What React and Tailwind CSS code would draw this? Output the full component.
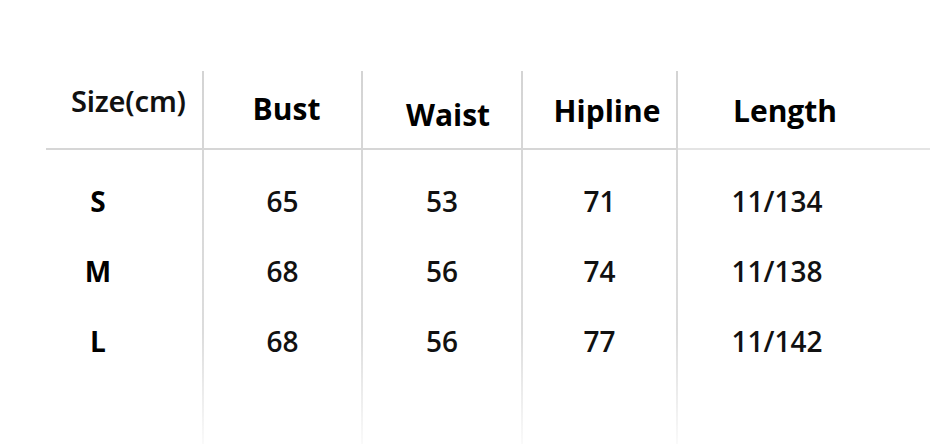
import React from "react";

const font = { fontFamily: '"Open Sans", "Noto Sans", sans-serif' };
const noto = { fontFamily: '"Noto Sans", "Open Sans", sans-serif' };

const cols = [
  { h: "Bust", data: ["65", "68", "68"], w: "w-[157px]", inner: "w-[157px]", hpad: "pt-[23px] pl-[8px]" },
  { h: "Waist", data: ["53", "56", "56"], w: "w-[158px]", inner: "w-[158px]", hpad: "pt-[29px] pl-[12px]" },
  { h: "Hipline", data: ["71", "74", "77"], w: "w-[153px]", inner: "w-[153px]", hpad: "pt-[25px] pl-[15px]" },
  { h: "Length", data: ["11/134", "11/138", "11/142"], w: "w-[252px]", inner: "w-[198px]", hpad: "pt-[25px] pl-[16px]" },
];

function VLine() {
  return (
    <div className="w-[2px] h-[373px] shrink-0 bg-gradient-to-b from-[#d4d4d4] via-[#dcdcdc] via-70% to-[#fafafa]" />
  );
}

export default function App() {
  return (
    <div className="w-[930px] h-[444px] bg-white overflow-hidden pt-[71px] pl-[46px]" style={font}>
      <div className="flex">
        {/* first column */}
        <div className="w-[156px] shrink-0 flex flex-col">
          <div className="h-[79px] border-b-2 border-[#d6d6d6] pt-[15px] pl-[25px]">
            <span className="text-[29px] font-semibold text-[#111] leading-none tracking-[-0.2px]" style={noto}>
              Size(cm)
            </span>
          </div>
          <div className="pt-[16px] flex flex-col">
            {["S", "M", "L"].map((s) => (
              <div key={s} className="h-[70px] w-[104px] flex items-center justify-center text-[28px] font-bold text-black leading-none">
                {s}
              </div>
            ))}
          </div>
        </div>
        {cols.map((c, i) => (
          <div key={c.h} className="flex shrink-0">
            <VLine />
            <div className={`${c.w} shrink-0 flex flex-col`}>
              <div
                className={`h-[79px] border-b-2 ${i === 3 ? "border-[#e4e4e4]" : "border-[#d6d6d6]"}`}
              >
                <div className={`${c.inner} ${c.hpad} text-center text-[30px] font-bold text-black leading-none`}>{c.h}</div>
              </div>
              <div className={`pt-[16px] flex flex-col ${c.inner}`}>
                {c.data.map((d, j) => (
                  <div key={j} className="h-[70px] flex items-center justify-center text-[28px] font-semibold text-[#111] leading-none">
                    {d}
                  </div>
                ))}
              </div>
            </div>
          </div>
        ))}
      </div>
    </div>
  );
}
